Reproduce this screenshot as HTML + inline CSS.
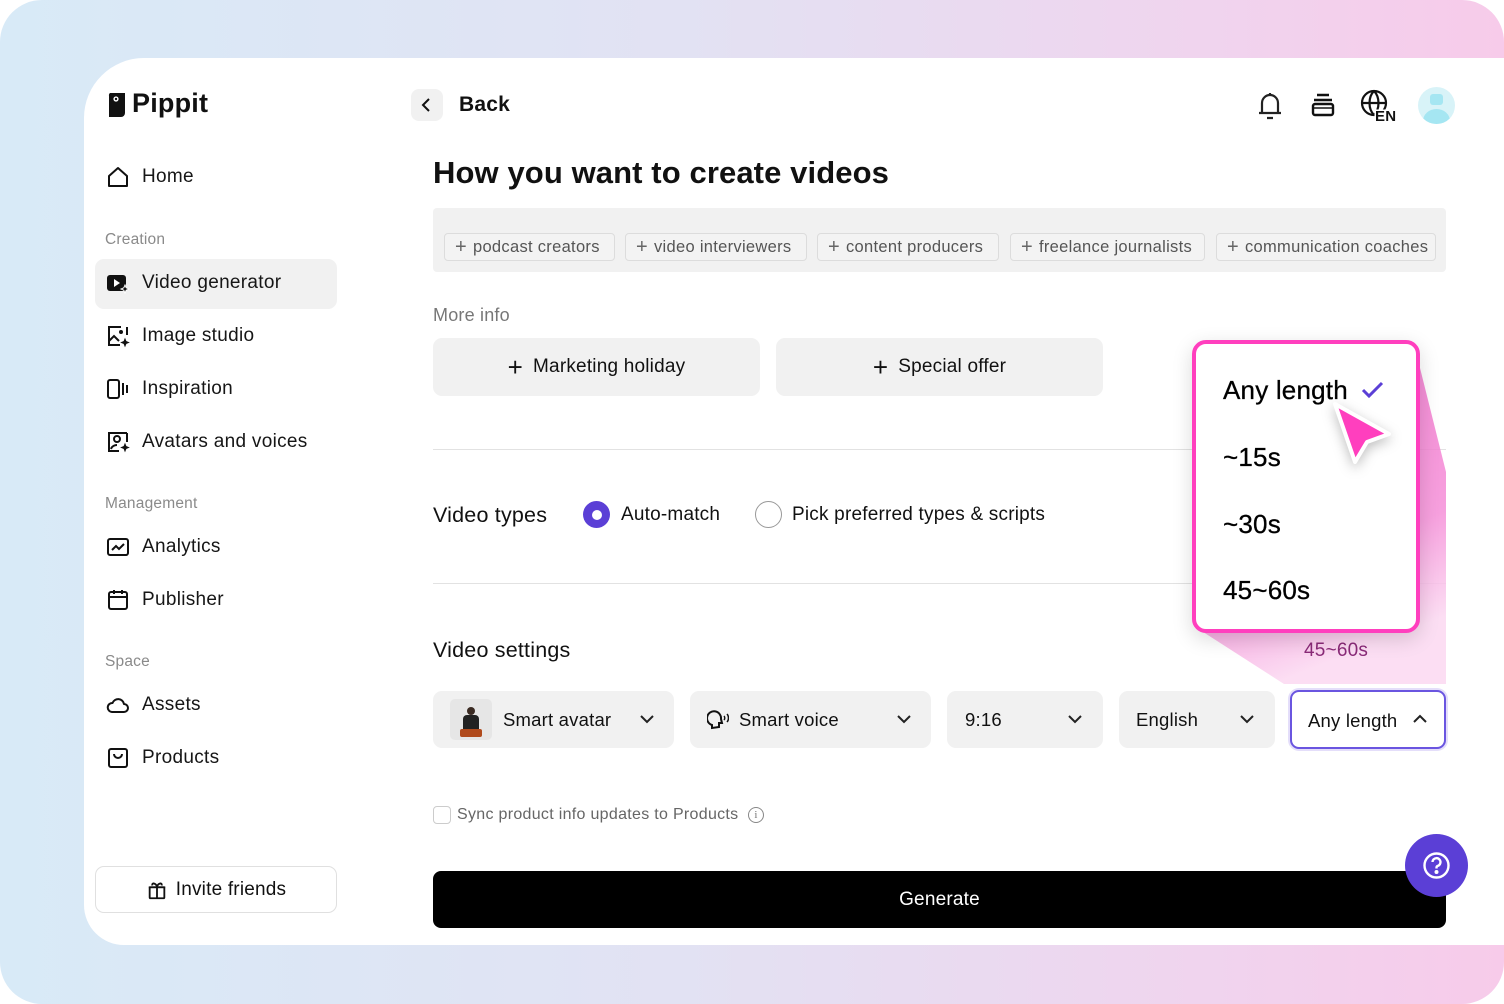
<!DOCTYPE html>
<html><head><meta charset="utf-8"><style>
*{box-sizing:border-box;margin:0;padding:0}
body{width:1504px;height:1004px;background:#fff;font-family:"Liberation Sans",sans-serif;color:#111;position:relative;overflow:hidden;letter-spacing:0.2px}
.bg{position:absolute;left:0;top:0;width:1504px;height:1004px;border-radius:42px;background:linear-gradient(90deg,#d8eaf7 0%,#e2e2f3 45%,#f0d4ee 80%,#f7cbea 100%)}
.card{position:absolute;left:84px;top:58px;width:1420px;height:887px;background:#fff;border-radius:60px 0 0 40px}
.abs{position:absolute}
.nav{position:absolute;left:106px;display:flex;align-items:center;font-size:19px;color:#161616;letter-spacing:0.3px}
.nav svg{margin-right:12px}
.sec{position:absolute;left:105px;font-size:15.5px;color:#8a8a8a}
.chip{position:absolute;top:233px;height:28px;border:1px solid #dcdcdc;border-radius:4px;background:#f3f3f3;font-size:16.5px;color:#555;display:flex;align-items:center;padding-left:10px;white-space:nowrap;letter-spacing:0.3px}
.chip b{font-weight:normal;font-size:20px;margin-right:6px;color:#666}
.sel{position:absolute;top:691px;height:57px;background:#f1f1f1;border-radius:9px;font-size:18.5px;display:flex;align-items:center;color:#111}
.chev{position:absolute;top:22px}
</style></head><body>
<div class="bg"></div>
<div class="card"></div>

<svg class="abs" style="left:107px;top:91px" width="20" height="27" viewBox="0 0 20 27"><path d="M3 2h15v20a4 4 0 0 1-4 4H2V5a3 3 0 0 1 1-3z" fill="#111"/><circle cx="9" cy="8" r="2.6" fill="#fff"/><circle cx="9" cy="8" r="1.2" fill="#111"/></svg>
<div class="abs" style="left:132px;top:88px;font-size:27px;font-weight:bold;letter-spacing:0.2px">Pippit</div>

<div class="nav" style="top:165px"><svg width="24" height="24" viewBox="0 0 24 24" fill="none" stroke="#111" stroke-width="2" stroke-linejoin="round"><path d="M3 11L12 3l9 8v10H3z"/></svg>Home</div>
<div class="sec" style="top:231px">Creation</div>
<div class="abs" style="left:95px;top:259px;width:242px;height:50px;background:#f1f1f1;border-radius:9px"></div>
<div class="nav" style="top:271px"><svg width="24" height="24" viewBox="0 0 24 24"><rect x="1" y="4" width="19" height="16" rx="3" fill="#111"/><path d="M8 8l6 4-6 4z" fill="#fff"/><path d="M19 14l1.2 2.8L23 18l-2.8 1.2L19 22l-1.2-2.8L15 18l2.8-1.2z" fill="#111" stroke="#fff" stroke-width="1"/></svg>Video generator</div>
<div class="nav" style="top:324px"><svg width="24" height="24" viewBox="0 0 24 24" fill="none" stroke="#111" stroke-width="2"><path d="M15 3H3v18h11"/><path d="M21 3v8"/><path d="M3 17l5-5 5 5"/><circle cx="15" cy="8" r="1" fill="#111"/><path d="M19 15l1 2.5 2.5 1-2.5 1-1 2.5-1-2.5-2.5-1 2.5-1z" fill="#111" stroke-width="1"/></svg>Image studio</div>
<div class="nav" style="top:377px"><svg width="24" height="24" viewBox="0 0 24 24" fill="none" stroke="#111" stroke-width="2"><rect x="2" y="3" width="11" height="18" rx="2"/><path d="M17 6v12M21 8v8"/></svg>Inspiration</div>
<div class="nav" style="top:430px"><svg width="24" height="24" viewBox="0 0 24 24" fill="none" stroke="#111" stroke-width="2"><path d="M14 3H3v18h10M21 3v9M3 3h18"/><circle cx="11" cy="9" r="3"/><path d="M5 19c1-3 4-4 6-4"/><path d="M19 14l1 2.5 2.5 1-2.5 1-1 2.5-1-2.5-2.5-1 2.5-1z" fill="#111" stroke-width="1"/></svg>Avatars and voices</div>
<div class="sec" style="top:495px">Management</div>
<div class="nav" style="top:535px"><svg width="24" height="24" viewBox="0 0 24 24" fill="none" stroke="#111" stroke-width="2"><rect x="2" y="4" width="20" height="16" rx="2"/><path d="M6 15l4-4 3 3 5-5"/></svg>Analytics</div>
<div class="nav" style="top:588px"><svg width="24" height="24" viewBox="0 0 24 24" fill="none" stroke="#111" stroke-width="2"><rect x="3" y="4" width="18" height="17" rx="2"/><path d="M3 9h18M8 2v4M16 2v4"/></svg>Publisher</div>
<div class="sec" style="top:653px">Space</div>
<div class="nav" style="top:693px"><svg width="24" height="24" viewBox="0 0 24 24" fill="none" stroke="#111" stroke-width="2" stroke-linejoin="round"><path d="M6 19h12a4 4 0 0 0 0-8 6 6 0 0 0-11.5-1A4.5 4.5 0 0 0 6 19z"/></svg>Assets</div>
<div class="nav" style="top:746px"><svg width="24" height="24" viewBox="0 0 24 24" fill="none" stroke="#111" stroke-width="2"><rect x="3" y="3" width="18" height="18" rx="2"/><path d="M8 8a4 4 0 0 0 8 0"/></svg>Products</div>

<div class="abs" style="left:95px;top:866px;width:242px;height:47px;border:1px solid #e0e0e0;border-radius:9px;display:flex;align-items:center;justify-content:center;font-size:19px"><svg width="22" height="22" viewBox="0 0 24 24" fill="none" stroke="#111" stroke-width="2" style="margin-right:8px"><rect x="4" y="9" width="16" height="12" rx="1"/><path d="M3 9h18M12 9v12M12 8C10 4 6 4 7 7M12 8c2-4 6-4 5-1"/></svg>Invite friends</div>

<div class="abs" style="left:411px;top:89px;width:32px;height:32px;background:#f1f1f1;border-radius:8px"></div>
<svg class="abs" style="left:419px;top:97px" width="16" height="16" viewBox="0 0 16 16" fill="none" stroke="#111" stroke-width="2"><path d="M10 2L4 8l6 6"/></svg>
<div class="abs" style="left:459px;top:93px;font-size:21px;font-weight:bold">Back</div>

<svg class="abs" style="left:1256px;top:90px" width="28" height="30" viewBox="0 0 28 30" fill="none" stroke="#222" stroke-width="2.2"><path d="M6 22V13a8 8 0 0 1 16 0v9M3 23h22M11 28h6M14 3v2"/></svg>
<svg class="abs" style="left:1310px;top:92px" width="26" height="26" viewBox="0 0 26 26" fill="none" stroke="#111" stroke-width="2.4"><path d="M7 3h12M4 8h18"/><rect x="3" y="12" width="20" height="11" rx="2"/><path d="M3 16h20" stroke-width="1.5"/></svg>
<svg class="abs" style="left:1360px;top:89px" width="40" height="34" viewBox="0 0 40 34" fill="none" stroke="#111" stroke-width="2.2"><circle cx="14" cy="14" r="12"/><path d="M2 14h24M14 2c-6 6-6 18 0 24M14 2c6 6 6 18 0 24"/><text x="15" y="32" font-family="Liberation Sans" font-weight="bold" font-size="15" fill="#111" stroke="#fff" stroke-width="3" paint-order="stroke">EN</text></svg>
<div class="abs" style="left:1418px;top:87px;width:37px;height:37px;border-radius:50%;background:#d8f3f8;overflow:hidden"><div style="position:absolute;left:12px;top:7px;width:13px;height:11px;border-radius:3px;background:#a5e6f2"></div><div style="position:absolute;left:5px;top:22px;width:27px;height:24px;border-radius:50%;background:#a5e6f2"></div></div>

<div class="abs" style="left:433px;top:155px;font-size:31px;font-weight:bold;letter-spacing:0.1px">How you want to create videos</div>

<div class="abs" style="left:433px;top:208px;width:1013px;height:64px;background:#f1f1f1;border-radius:4px"></div>
<div class="chip" style="left:444px;width:171px"><b>+</b>podcast creators</div>
<div class="chip" style="left:625px;width:182px"><b>+</b>video interviewers</div>
<div class="chip" style="left:817px;width:182px"><b>+</b>content producers</div>
<div class="chip" style="left:1010px;width:195px"><b>+</b>freelance journalists</div>
<div class="chip" style="left:1216px;width:220px"><b>+</b>communication coaches</div>

<div class="abs" style="left:433px;top:305px;font-size:18px;color:#777">More info</div>
<div class="abs" style="left:433px;top:338px;width:327px;height:58px;background:#f1f1f1;border-radius:9px;display:flex;align-items:center;justify-content:center;font-size:19px"><span style="font-size:26px;margin-right:10px;font-weight:300">+</span>Marketing holiday</div>
<div class="abs" style="left:776px;top:338px;width:327px;height:58px;background:#f1f1f1;border-radius:9px;display:flex;align-items:center;justify-content:center;font-size:19px"><span style="font-size:26px;margin-right:10px;font-weight:300">+</span>Special offer</div>

<div class="abs" style="left:433px;top:449px;width:1013px;height:1px;background:#e2e2e2"></div>
<div class="abs" style="left:433px;top:503px;font-size:21.5px">Video types</div>
<div class="abs" style="left:583px;top:501px;width:27px;height:27px;border-radius:50%;background:#5b3fd6"><div style="position:absolute;left:8.5px;top:8.5px;width:10px;height:10px;border-radius:50%;background:#fff"></div></div>
<div class="abs" style="left:621px;top:504px;font-size:19px">Auto-match</div>
<div class="abs" style="left:755px;top:501px;width:27px;height:27px;border-radius:50%;border:1.5px solid #999"></div>
<div class="abs" style="left:792px;top:504px;font-size:19px">Pick preferred types &amp; scripts</div>
<div class="abs" style="left:433px;top:583px;width:1013px;height:1px;background:#e2e2e2"></div>

<div class="abs" style="left:433px;top:638px;font-size:21.5px">Video settings</div>

<div class="sel" style="left:433px;width:241px"><div style="position:absolute;left:17px;top:8px;width:42px;height:41px;background:#e6e6e6;border-radius:5px;overflow:hidden"><div style="position:absolute;left:17px;top:8px;width:8px;height:8px;border-radius:50%;background:#3a2a22"></div><div style="position:absolute;left:13px;top:16px;width:16px;height:20px;background:#222;border-radius:4px 4px 0 0"></div><div style="position:absolute;left:10px;top:30px;width:22px;height:8px;background:#b04a1c;border-radius:2px"></div></div><span style="position:absolute;left:70px">Smart avatar</span><svg class="chev" style="left:206px" width="16" height="12" viewBox="0 0 16 12" fill="none" stroke="#222" stroke-width="2"><path d="M2 3l6 6 6-6"/></svg></div>
<div class="sel" style="left:690px;width:241px"><svg style="position:absolute;left:17px;top:19px" width="22" height="20" viewBox="0 0 22 20" fill="none" stroke="#111" stroke-width="2"><path d="M5 18v-3a7 7 0 1 1 9-6l1 4h-3v4z"/><path d="M17 6c1 1 1 3 0 4M20 4c2 2 2 6 0 8" stroke-width="1.5"/></svg><span style="position:absolute;left:49px">Smart voice</span><svg class="chev" style="left:206px" width="16" height="12" viewBox="0 0 16 12" fill="none" stroke="#222" stroke-width="2"><path d="M2 3l6 6 6-6"/></svg></div>
<div class="sel" style="left:947px;width:156px"><span style="position:absolute;left:18px">9:16</span><svg class="chev" style="left:120px" width="16" height="12" viewBox="0 0 16 12" fill="none" stroke="#222" stroke-width="2"><path d="M2 3l6 6 6-6"/></svg></div>
<div class="sel" style="left:1119px;width:156px"><span style="position:absolute;left:17px">English</span><svg class="chev" style="left:120px" width="16" height="12" viewBox="0 0 16 12" fill="none" stroke="#222" stroke-width="2"><path d="M2 3l6 6 6-6"/></svg></div>

<svg class="abs" style="left:1190px;top:340px" width="260" height="350" viewBox="0 0 260 350"><defs><linearGradient id="pg" x1="0" y1="0" x2="0.3" y2="1"><stop offset="0" stop-color="#f06ac8"/><stop offset="0.7" stop-color="#f58fd8"/><stop offset="1" stop-color="#fbd8f1"/></linearGradient></defs><path d="M228 20L256 132V344H94L10 290V20z" fill="url(#pg)" opacity="0.85"/><text x="114" y="316" font-family="Liberation Sans" font-size="19" fill="#8a2a78">45~60s</text></svg>

<div class="abs" style="left:1290px;top:690px;width:156px;height:59px;border:2px solid #6a55e0;border-radius:9px;background:#fff;box-shadow:0 0 0 2px #e4defa;font-size:18.5px"><span style="position:absolute;left:16px;top:18px">Any length</span><svg style="position:absolute;left:120px;top:21px" width="16" height="12" viewBox="0 0 16 12" fill="none" stroke="#222" stroke-width="2"><path d="M2 9l6-6 6 6"/></svg></div>

<div class="abs" style="left:1192px;top:340px;width:228px;height:293px;background:#fff;border:4px solid #ff3fbe;border-radius:14px;box-shadow:0 6px 20px rgba(0,0,0,0.15);color:#000">
<div style="position:absolute;left:27px;top:31px;font-size:26px;-webkit-text-stroke:0.3px #000">Any length</div>
<svg style="position:absolute;left:164px;top:36px" width="26" height="20" viewBox="0 0 26 20" fill="none" stroke="#5b3fd6" stroke-width="3"><path d="M3 10l6 6L22 3"/></svg>
<div style="position:absolute;left:27px;top:98px;font-size:26px;-webkit-text-stroke:0.3px #000">~15s</div>
<div style="position:absolute;left:27px;top:165px;font-size:26px;-webkit-text-stroke:0.3px #000">~30s</div>
<div style="position:absolute;left:27px;top:231px;font-size:26px;-webkit-text-stroke:0.3px #000">45~60s</div>
</div>
<svg class="abs" style="left:1325px;top:396px;filter:drop-shadow(0 4px 6px rgba(0,0,0,0.25))" width="72" height="72" viewBox="0 0 72 72"><path d="M10 8L64 38L42 46L30 66z" fill="#ff3fbe" stroke="#fff" stroke-width="4" stroke-linejoin="round"/></svg>

<div class="abs" style="left:433px;top:806px;width:18px;height:18px;border:1.5px solid #ccc;border-radius:4px"></div>
<div class="abs" style="left:457px;top:806px;font-size:16px;color:#666;letter-spacing:0.3px">Sync product info updates to Products</div>
<div class="abs" style="left:748px;top:807px;width:16px;height:16px;border:1.3px solid #888;border-radius:50%;font-size:11px;color:#777;text-align:center;line-height:14px;font-family:'Liberation Serif',serif">i</div>

<div class="abs" style="left:433px;top:871px;width:1013px;height:57px;background:#000;border-radius:8px;color:#fff;font-size:19px;display:flex;align-items:center;justify-content:center">Generate</div>
<div class="abs" style="left:1405px;top:834px;width:63px;height:63px;border-radius:50%;background:#5b3fd6"><svg style="position:absolute;left:17px;top:17px" width="29" height="29" viewBox="0 0 29 29" fill="none" stroke="#fff" stroke-width="2.4"><circle cx="14.5" cy="14.5" r="12"/><path d="M10.5 11a4 4 0 1 1 5 4c-1 .4-1 1-1 2.5"/><circle cx="14.5" cy="21" r="0.8" fill="#fff"/></svg></div>
</body></html>
